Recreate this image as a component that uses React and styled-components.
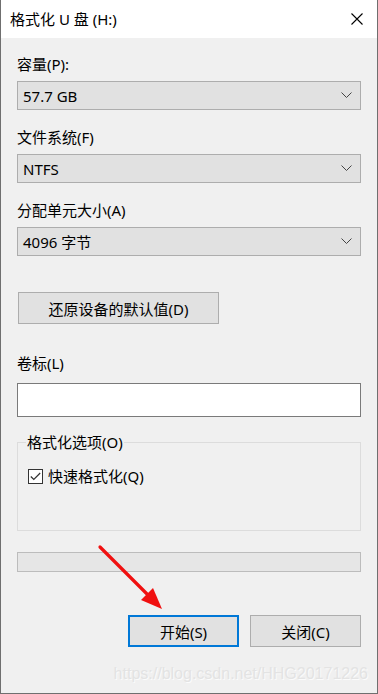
import React from 'react';
import styled, {createGlobalStyle} from "styled-components"

const Global = createGlobalStyle`
    html, body {
        margin: 0;
        padding: 0;
        background: #f0f0f0;
    }
    * {
        box-sizing: border-box;
    }
`

const Window = styled.div`
    position: relative;
    width: 378px;
    height: 694px;
    display: flex;
    flex-direction: column;
    background: #f0f0f0;
    border: 1px solid #6f6f6f;
    border-top: none;
    font-family: "Noto Sans", "Noto Sans CJK SC", sans-serif;
    font-size: 15px;
    color: #000;
    overflow: hidden;
`

const TitleBar = styled.div`
    height: 38px;
    flex: none;
    display: flex;
    align-items: center;
    justify-content: space-between;
    padding: 0 14px 0 9px;
    background: #fff;
`

const Title = styled.div`
    font-size: 15px;
    line-height: 20px;
`

const Body = styled.div`
    display: flex;
    flex-direction: column;
    padding: 16px 16px 0 16px;
`

const Label = styled.div`
    line-height: 20px;
    height: 20px;
    margin-top: ${p => p.top || 0}px;
`

const Combo = styled.div`
    height: 29px;
    margin-top: 7px;
    display: flex;
    align-items: center;
    justify-content: space-between;
    padding: 0 8px 0 5px;
    background: #e1e1e1;
    border: 1px solid #adadad;
`

const Button = styled.div`
    height: 32px;
    width: ${p => p.width}px;
    display: flex;
    align-items: center;
    justify-content: center;
    background: #e1e1e1;
    border: ${p => p.primary ? "2px solid #0078d7" : "1px solid #adadad"};
`

const RestoreButton = styled(Button)`
    margin-top: 36px;
    margin-left: 1px;
`

const TextInput = styled.div`
    height: 34px;
    margin-top: 10px;
    background: #fff;
    border: 1px solid #7a7a7a;
`

const Group = styled.fieldset`
    margin: 15px 0 0 0;
    padding: 14px 10px 0 10px;
    height: 99px;
    border: 1px solid #dcdcdc;
    min-width: 0;
`

const Legend = styled.legend`
    padding: 0 1px 0 1px;
    margin-left: -2px;
    line-height: 20px;
`

const CheckRow = styled.div`
    display: flex;
    align-items: center;
    gap: 5px;
    line-height: 20px;
`

const CheckBox = styled.div`
    width: 15px;
    height: 15px;
    border: 1px solid #333;
    background: #fff;
    display: flex;
    align-items: center;
    justify-content: center;
`

const Progress = styled.div`
    height: 20px;
    margin-top: 21px;
    background: #e6e6e6;
    border: 1px solid #bcbcbc;
`

const ButtonRow = styled.div`
    display: flex;
    justify-content: flex-end;
    gap: 11px;
    margin-top: 43px;
`

const Watermark = styled.div`
    position: absolute;
    right: 9px;
    top: 664px;
    font-family: "Liberation Sans", Arial, sans-serif;
    font-size: 16px;
    line-height: 20px;
    color: #e3e3e3;
    text-shadow: 1px 1px 0 #fbfbfb;
`

const Overlay = styled.svg`
    position: absolute;
    left: 0;
    top: 0;
    pointer-events: none;
`

const Chevron = () => (
    <svg width="11" height="7" viewBox="0 0 11 7">
        <path d="M0.5 0.5 L5.5 5.5 L10.5 0.5" fill="none" stroke="#444" strokeWidth="1"/>
    </svg>
)

const Close = () => (
    <svg width="12" height="12" viewBox="0 0 12 12">
        <path d="M0.5 0.5 L11.5 11.5 M11.5 0.5 L0.5 11.5" stroke="#000" strokeWidth="1.1"/>
    </svg>
)

const combos = [
    {label: "容量(P):", value: "57.7 GB", top: 0},
    {label: "文件系统(F)", value: "NTFS", top: 17},
    {label: "分配单元大小(A)", value: "4096 字节", top: 17},
]

const App = () => {
    return (
        <Window>
            <Global/>
            <TitleBar>
                <Title>格式化 U 盘 (H:)</Title>
                <Close/>
            </TitleBar>
            <Body>
                {combos.map(c => <React.Fragment key={c.label}>
                    <Label top={c.top}>{c.label}</Label>
                    <Combo>
                        <span>{c.value}</span>
                        <Chevron/>
                    </Combo>
                </React.Fragment>)}
                <RestoreButton width={201}>还原设备的默认值(D)</RestoreButton>
                <Label top={29}>卷标(L)</Label>
                <TextInput/>
                <Group>
                    <Legend>格式化选项(O)</Legend>
                    <CheckRow>
                        <CheckBox>
                            <svg width="11" height="9" viewBox="0 0 11 9">
                                <path d="M0.8 4.5 L3.8 7.5 L10.2 1" fill="none" stroke="#333" strokeWidth="1.2"/>
                            </svg>
                        </CheckBox>
                        <span>快速格式化(Q)</span>
                    </CheckRow>
                </Group>
                <Progress/>
                <ButtonRow>
                    <Button primary width={111}>开始(S)</Button>
                    <Button width={111}>关闭(C)</Button>
                </ButtonRow>
            </Body>
            <Watermark>https://blog.csdn.net/HHG20171226</Watermark>
            <Overlay width="378" height="694" viewBox="0 0 378 694">
                <path d="M99 547 L150 598" stroke="#f01010" strokeWidth="3.2" strokeLinecap="round"/>
                <path d="M161 609 L140 600 L152 588 Z" fill="#f01010"/>
            </Overlay>
        </Window>
    );
};

export default App;
